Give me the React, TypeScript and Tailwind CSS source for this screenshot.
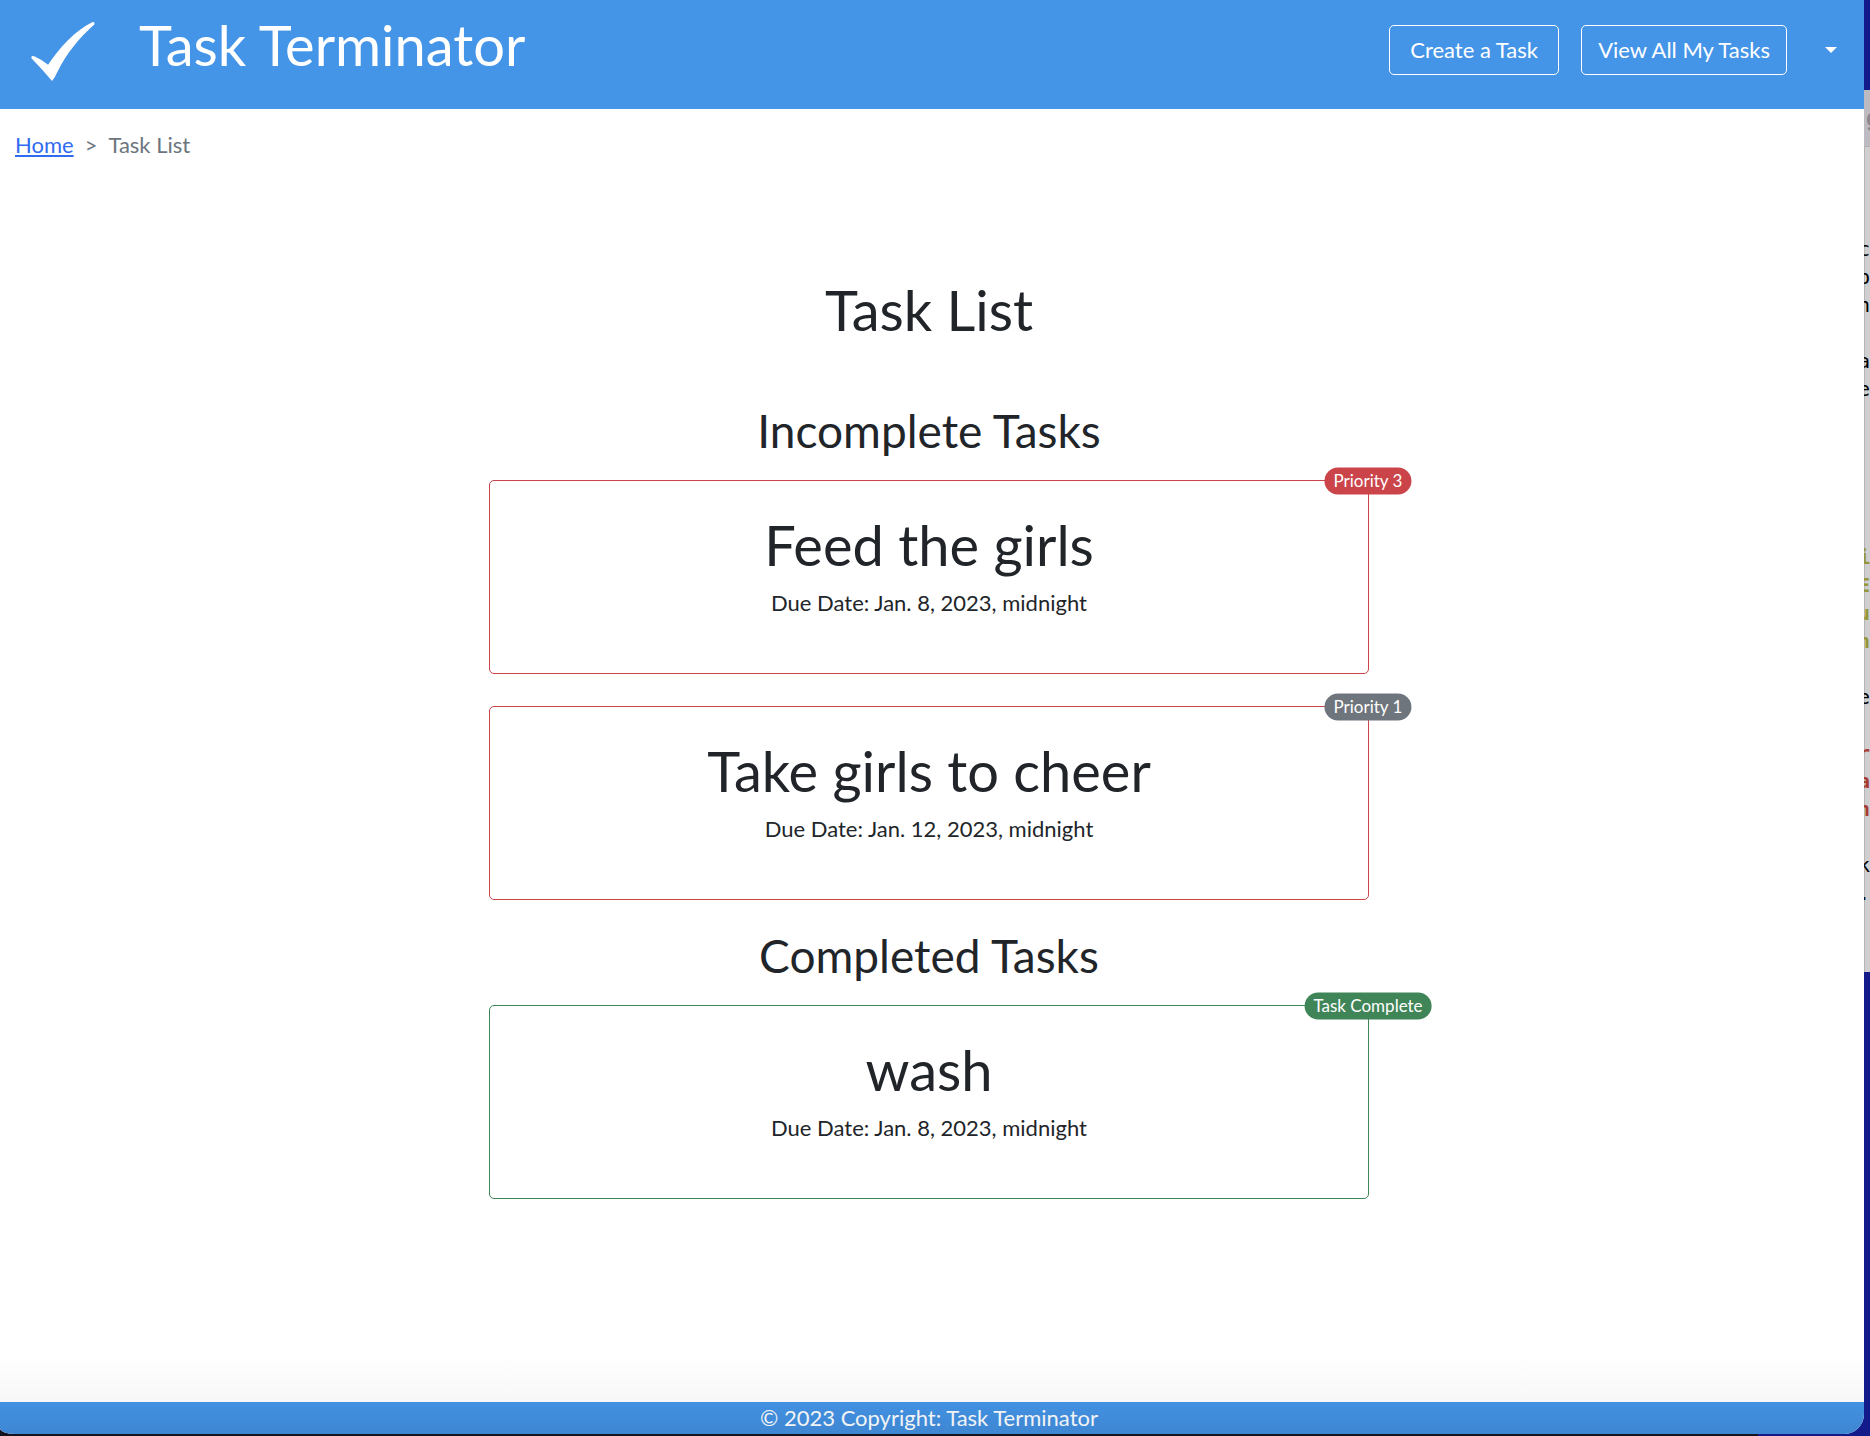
type Tone = "danger" | "success";

type Task = {
  title: string;
  due: string;
  badge: string;
  badgeClass: string;
  tone: Tone;
};

const incomplete: Task[] = [
  { title: "Feed the girls", due: "Jan. 8, 2023, midnight", badge: "Priority 3", badgeClass: "bg-[#cb444a]", tone: "danger" },
  { title: "Take girls to cheer", due: "Jan. 12, 2023, midnight", badge: "Priority 1", badgeClass: "bg-[#6e757c]", tone: "danger" },
];

const completed: Task[] = [
  { title: "wash", due: "Jan. 8, 2023, midnight", badge: "Task Complete", badgeClass: "bg-[#408558]", tone: "success" },
];

const borders: Record<Tone, string> = {
  danger: "border-[#cb444a]",
  success: "border-[#408558]",
};

/* Last column of the editor window that sits behind the browser. */
const editorColumn: { ch: string; cls: string }[] = [
  { ch: "c", cls: "text-black" },
  { ch: "p", cls: "text-black" },
  { ch: "n", cls: "text-black" },
  { ch: "", cls: "" },
  { ch: "a", cls: "text-black" },
  { ch: "e", cls: "text-black" },
  { ch: "", cls: "" },
  { ch: "", cls: "" },
  { ch: "", cls: "" },
  { ch: "", cls: "" },
  { ch: "", cls: "" },
  { ch: "i", cls: "font-bold text-[#97973a]" },
  { ch: "E", cls: "font-bold text-[#97973a]" },
  { ch: "u", cls: "font-bold text-[#97973a]" },
  { ch: "n", cls: "font-bold text-[#97973a]" },
  { ch: "", cls: "" },
  { ch: "e", cls: "text-black" },
  { ch: "", cls: "" },
  { ch: "r", cls: "font-bold text-[#a83c30]" },
  { ch: "a", cls: "font-bold text-[#a83c30]" },
  { ch: "n", cls: "font-bold text-[#a83c30]" },
  { ch: "", cls: "" },
  { ch: "k", cls: "text-black" },
  { ch: ".", cls: "text-black" },
];

function CheckLogo() {
  return (
    <svg className="h-[62px] w-[66px]" viewBox="84 60 186 186" preserveAspectRatio="none" fill="#fff" aria-hidden="true">
      <path d="M88 175 Q86 166 96 169 Q119 180 135 194 C166 145 212 91 259 67 Q266 64 266 73 C220 116 185 165 163 212 Q155 231 146 243 Q120 210 88 175 Z" />
    </svg>
  );
}

function TaskCard({ task }: { task: Task }) {
  return (
    <article className={`relative h-[194px] w-full rounded-[5px] border pt-9 text-center ${borders[task.tone]}`}>
      <h3 className="text-[56px] leading-[56px]">{task.title}</h3>
      <p className="mt-[14px] text-[22px] leading-8">Due Date: {task.due}</p>
      <span
        className={`absolute top-0 right-0 flex h-[27px] translate-x-1/2 -translate-y-1/2 items-center rounded-full px-[9px] pb-[2px] text-[17px] whitespace-nowrap text-white ${task.badgeClass}`}
      >
        {task.badge}
      </span>
    </article>
  );
}

export default function App() {
  return (
    <div className="flex min-h-screen flex-col bg-linear-to-r from-[#14141f] from-94% to-[#131a8a] to-94% font-['Lato',sans-serif] text-[#212529]">
      <div className="flex flex-1">
        <div className="flex min-w-0 flex-1 flex-col overflow-hidden rounded-br-[20px] rounded-bl-[14px_6px] bg-white">
          <header className="flex h-[109px] items-start justify-between bg-[#4494e7] pr-[27px] pl-[30px] text-white">
            <a href="#home" className="flex items-start gap-[43px]">
              <span className="pt-5">
                <CheckLogo />
              </span>
              <span className="pt-4 text-[56px] leading-[58px]">Task Terminator</span>
            </a>
            <nav className="flex items-center gap-[22px] pt-[25px] text-[22px]">
              <button type="button" className="h-[50px] min-w-[170px] rounded-[5px] border border-white px-4 pb-[2px]">
                Create a Task
              </button>
              <button type="button" className="h-[50px] rounded-[5px] border border-white px-4 pb-[2px]">
                View All My Tasks
              </button>
              <button type="button" aria-label="Account menu" className="flex h-[50px] items-center pl-4">
                <svg className="h-[6px] w-3" viewBox="0 0 12 6" fill="#fff" aria-hidden="true">
                  <path d="M0 0h12L6 6z" />
                </svg>
              </button>
            </nav>
          </header>

          <nav aria-label="Breadcrumb" className="pt-5 pl-[15px] text-[22px] leading-8">
            <ol className="flex">
              <li>
                <a href="#home" className="text-[#2f6cf0] underline decoration-2 underline-offset-2">
                  Home
                </a>
              </li>
              <li className="px-[11px] text-[#6c757d]" aria-hidden="true">
                &gt;
              </li>
              <li className="text-[#6c757d]" aria-current="page">
                Task List
              </li>
            </ol>
          </nav>

          <main className="flex flex-1 flex-col items-center pt-[120px] pr-[6px]">
            <h1 className="text-[56px] leading-[58px]">Task List</h1>
            <section className="mt-[66px] flex w-full max-w-[880px] flex-col items-center">
              <h2 className="mb-[23px] text-[46px] leading-[52px]">Incomplete Tasks</h2>
              <div className="flex w-full flex-col gap-8">
                {incomplete.map((t) => (
                  <TaskCard key={t.title} task={t} />
                ))}
              </div>
            </section>
            <section className="mt-[30px] flex w-full max-w-[880px] flex-col items-center">
              <h2 className="mb-[23px] text-[46px] leading-[52px]">Completed Tasks</h2>
              <div className="flex w-full flex-col gap-8">
                {completed.map((t) => (
                  <TaskCard key={t.title} task={t} />
                ))}
              </div>
            </section>
          </main>

          <div className="h-[48px] bg-linear-to-b from-white to-[#f7f7f7]" />
          <footer className="h-8 bg-linear-to-b from-[#4291e2] to-[#3e86d2] pr-[6px] text-center text-[22px] leading-[31px] text-[#f1f3f5]">
            © 2023 Copyright: Task Terminator
          </footer>
        </div>

        <div aria-hidden="true" className="flex w-[6px] flex-col overflow-hidden bg-[#131a8a] font-['DejaVu_Sans_Mono',monospace] text-xl">
          <div className="h-[90px]" />
          <div className="flex h-[57px] items-center border-b border-[#b0b0b4] bg-[#bcbbc2] pl-[2px] font-['Liberation_Sans',sans-serif] text-2xl font-bold text-[#8a8990]">
            <span>g</span>
          </div>
          <div className="h-[825px] border-l border-[#b4b4b4] bg-[#cfcfcf] pt-[88px]">
            {editorColumn.map((c, i) => (
              <div key={i} className={`flex h-7 items-center justify-end ${c.cls}`}>
                <span>{c.ch}</span>
              </div>
            ))}
          </div>
        </div>
      </div>
      <div className="h-[2px]" />
    </div>
  );
}
